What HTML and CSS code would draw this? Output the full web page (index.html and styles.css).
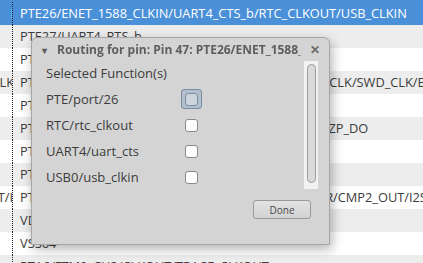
FILE: index.html
```html
<html>
  <head>
    <title>Pin routing</title>
    <link rel="stylesheet" href="styles.css">
  </head>
  <body>
    <div class="pins">
      <div class="row sel first"><div class="c1"><span>l</span></div><div class="c2">PTE26/ENET_1588_CLKIN/UART4_CTS_b/RTC_CLKOUT/USB_CLKIN</div></div>
      <div class="row odd"><div class="c1"></div><div class="c2">PTE27/UART4_RTS_b</div></div>
      <div class="row"><div class="c1"></div><div class="c2">PTE28</div></div>
      <div class="row odd"><div class="c1"><span>_CLK</span></div><div class="c2">PTA0/UART0_CTS_b/UART0_COL_b/FTM_CH5/JTAG_TCLK/SWD_CLK/EZP_CLK</div></div>
      <div class="row"><div class="c1"></div><div class="c2">PTA1/UART0_RX/FTM2_CH0/JTAG_TDI/EZP_DI</div></div>
      <div class="row odd"><div class="c1"></div><div class="c2">PTA2/UART0_TX/FTM_CH7/JTAG_TDO/TRACE_SWO/EZP_DO</div></div>
      <div class="row"><div class="c1"></div><div class="c2">PTA3/UART0_RTS_b/FTM0_CH0/JTAG_TMS/SWD_DIO</div></div>
      <div class="row odd"><div class="c1"></div><div class="c2">PTA4/LLWU_P3/FTM0_CH1/NMI_b/EZP_CS_b</div></div>
      <div class="row"><div class="c1"><span class="tight">OUT/I</span></div><div class="c2">PTA5/USB_CLKIN/FTM0_CH2/RMII0_RXER/MIII0_RXER/CMP2_OUT/I2S0_TX_BCLK/JTAG_TRST_b</div></div>
      <div class="row odd"><div class="c1"></div><div class="c2">VDD63</div></div>
      <div class="row"><div class="c1"></div><div class="c2">VSS64</div></div>
      <div class="row odd"><div class="c1"></div><div class="c2">PTA6/FTM0_CH3/CLKOUT/TRACE_CLKOUT</div></div>
    </div>

    <div class="dialog">
      <div class="titlebar">
        <span class="arrow">&#9662;</span>
        <span class="title">Routing for pin: Pin 47: PTE26/ENET_1588_CLKIN/UART4_CTS_b/RTC_CLKOUT/USB_CLKIN</span>
        <span class="close">&#10005;</span>
      </div>
      <div class="body">
        <div class="scroller">
          <div class="heading">Selected Function(s)</div>
          <div class="funcs">
            <div class="fn">PTE/port/26</div>
            <div class="cb focus"><span class="box"></span></div>
            <div class="fn">RTC/rtc_clkout</div>
            <div class="cb"><span class="box"></span></div>
            <div class="fn">UART4/uart_cts</div>
            <div class="cb"><span class="box"></span></div>
            <div class="fn">USB0/usb_clkin</div>
            <div class="cb"><span class="box"></span></div>
            <div class="fn">ENET/1588_clkin</div>
            <div class="cb"><span class="box"></span></div>
          </div>
        </div>
        <div class="trough"><div class="slider"></div></div>
      </div>
      <div class="footer">
        <button class="done">Done</button>
      </div>
    </div>
  </body>
</html>
```

FILE: styles.css
```css
body {
    margin: 0;
    font-family: "Open Sans", sans-serif;
    font-size: 13px;
    color: #3c3c3c;
    background: #ffffff;
    overflow: hidden;
}

.pins {
    padding-top: 2px;
    height: 263px;
    box-sizing: border-box;
    overflow: hidden;
    font-size: 12.8px;
}

.row {
    display: flex;
    height: 23px;
    line-height: 23px;
    background: #ffffff;
    white-space: nowrap;
    overflow: hidden;
}
.row.odd {
    background: #ededed;
}
.row.sel {
    background: #4a90d9;
    color: #ffffff;
}
.row.first {
    margin-top: -2px;
    height: 25px;
    padding-top: 2px;
    box-sizing: border-box;
    line-height: 23px;
}

.c1 {
    width: 12px;
    flex: none;
    overflow: hidden;
    display: flex;
    justify-content: flex-end;
    border-right: 1px dotted #222;
}
.c1 span {
    margin-right: -2px;
}
.c1 span.tight {
    margin-right: -1px;
}
.c2 {
    padding-left: 7px;
}

.dialog {
    position: absolute;
    left: 31px;
    top: 37px;
    width: 299px;
    height: 208px;
    box-sizing: border-box;
    background: #d4d4d4;
    border: 1px solid #a6a6a6;
    border-radius: 6px 6px 0 0;
    box-shadow: 2px 4px 12px rgba(0, 0, 0, 0.3);
    display: flex;
    flex-direction: column;
}

.titlebar {
    height: 23px;
    display: flex;
    align-items: center;
    padding: 0 9px 0 10px;
    color: #5e5e5e;
    font-weight: bold;
    font-size: 12px;
}
.arrow {
    font-size: 10px;
    width: 15px;
}
.title {
    flex: 1;
    overflow: hidden;
    white-space: nowrap;
    margin-right: 8px;
    -webkit-mask-image: linear-gradient(to left, transparent 0, #000 4px);
}
.close {
    font-size: 12px;
    color: #6a6a6a;
}

.body {
    display: flex;
    height: 128px;
}
.scroller {
    flex: 1;
    overflow: hidden;
    padding-left: 14px;
}
.heading {
    height: 25px;
    line-height: 25px;
}
.funcs {
    display: grid;
    grid-template-columns: 135px 21px;
    grid-auto-rows: 26px;
    align-items: center;
}
.cb {
    width: 21px;
    height: 20px;
    box-sizing: border-box;
    display: flex;
    align-items: center;
    justify-content: center;
    border-radius: 3px;
}
.cb.focus {
    background: #b3bfcc;
    border: 1px solid #7a8ca0;
}
.box {
    width: 13px;
    height: 13px;
    box-sizing: border-box;
    background: #ffffff;
    border: 1px solid #8a8a8a;
    border-radius: 3px;
}
.cb.focus .box {
    background: #ccd5de;
    border-color: #7d8da0;
}

.trough {
    width: 14px;
    margin-right: 11px;
    background: #f2f2f2;
    padding: 3px 2px 6px 3px;
    box-sizing: border-box;
}
.slider {
    height: 100%;
    border: 1px solid #9c9c9c;
    border-radius: 5px;
    background: #dadada;
    box-sizing: border-box;
}

.footer {
    display: flex;
    justify-content: flex-end;
    padding: 11px 18px 0 0;
}
.done {
    width: 58px;
    height: 19px;
    font-family: "Open Sans", sans-serif;
    font-size: 10px;
    color: #4a4a4a;
    border: 1px solid #9a9a9a;
    border-radius: 3px;
    background: linear-gradient(#e2e2e2, #d2d2d2);
    padding: 0;
}
```
